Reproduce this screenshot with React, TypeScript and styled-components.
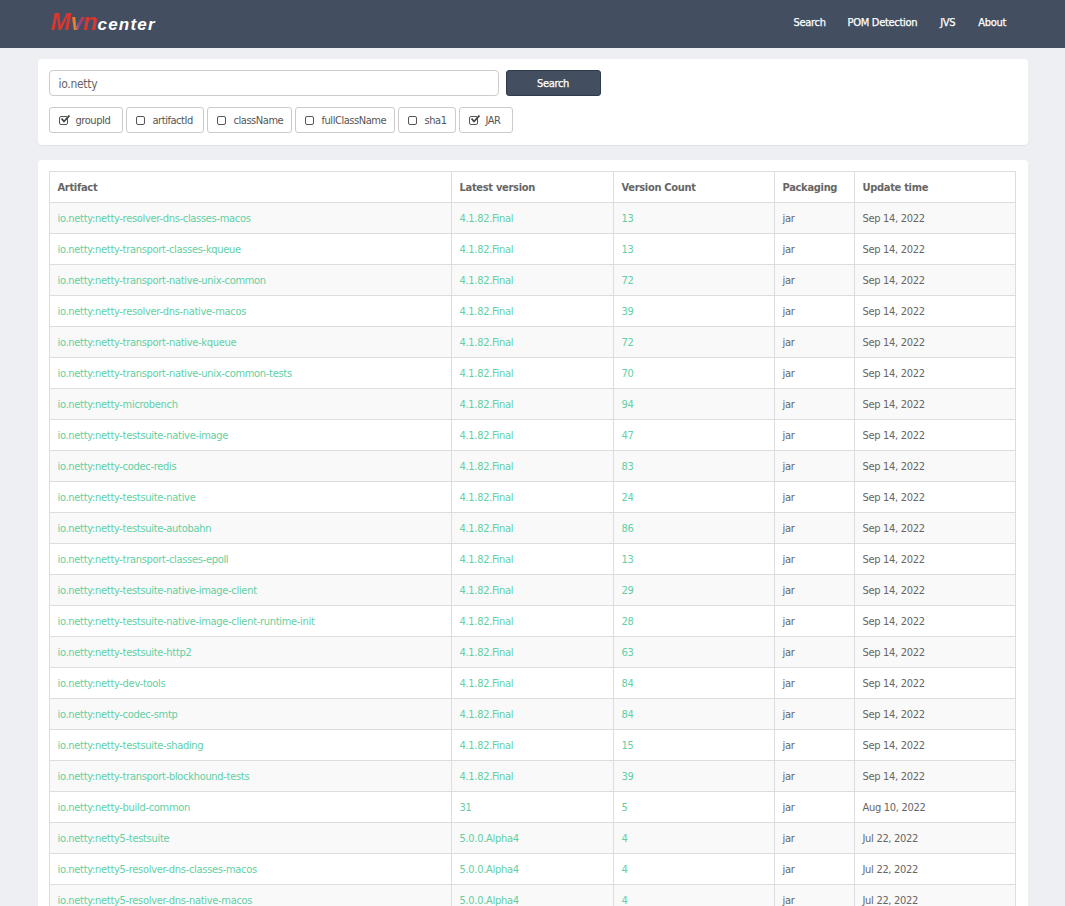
import React from "react";
import styled, { createGlobalStyle } from "styled-components";

const Global = createGlobalStyle`
  html, body {
    margin: 0;
    background: #eeeff3;
    font-family: "DejaVu Sans Condensed", "DejaVu Sans", sans-serif;
    font-size: 11px;
    letter-spacing: -0.3px;
    color: #666;
  }
`;

const Header = styled.header`
  height: 48px;
  background: #434f61;
  display: flex;
  align-items: center;
  justify-content: space-between;
  padding: 0 59px 4px 51px;
  box-sizing: border-box;
`;
const Logo = styled.div`
  display: flex;
  align-items: baseline;
  font-family: "Liberation Sans", sans-serif;
  font-style: italic;
  font-weight: 700;
  letter-spacing: 0;
`;
const LogoMvn = styled.span`
  font-size: 24px;
  letter-spacing: -0.5px;
  background: linear-gradient(90deg, #d9372f 0 42%, #e8892a 50%, #8d3fa0 60%, #d9372f 70%);
  -webkit-background-clip: text;
  background-clip: text;
  color: transparent;
`;
const LogoCenter = styled.span`
  font-size: 17px;
  letter-spacing: 1.2px;
  color: #fff;
`;
const Nav = styled.nav`
  display: flex;
  gap: 22px;
`;
const NavLink = styled.a`
  color: #fff;
  -webkit-text-stroke: 0.25px #fff;
  text-decoration: none;
  text-align: center;
  &:nth-child(3) {
    min-width: 17px;
  }
`;
const Main = styled.main`
  width: 990px;
  margin: 11px auto 0;
  display: flex;
  flex-direction: column;
  gap: 15px;
`;
const Card = styled.section`
  background: #fff;
  border-radius: 4px;
  padding: 11px 13px 12px 11px;
  box-shadow: 0 1px 1px rgba(0, 0, 0, 0.06);
`;
const SearchRow = styled.div`
  display: flex;
  gap: 7px;
  margin-bottom: 11px;
`;
const SearchInput = styled.input`
  box-sizing: border-box;
  width: 450px;
  height: 26px;
  padding: 1px 9px 0;
  border: 1px solid #ccc;
  border-radius: 4px;
  font: inherit;
  font-size: 12px;
  letter-spacing: inherit;
  color: #666;
  outline: none;
`;
const SearchButton = styled.button`
  width: 95px;
  height: 26px;
  padding: 1px 0 0;
  border: 1px solid #2f3a4a;
  border-radius: 3px;
  background: #434f61;
  color: #fff;
  -webkit-text-stroke: 0.25px #fff;
  font: inherit;
  letter-spacing: inherit;
`;
const Filters = styled.div`
  display: flex;
  gap: 3px;
`;
const Filter = styled.label<{ $w: number }>`
  box-sizing: border-box;
  width: ${(p) => p.$w}px;
  height: 26px;
  display: flex;
  align-items: center;
  gap: 8px;
  padding: 1px 0 0 9px;
  border: 1px solid #ccc;
  border-radius: 3px;
  color: #555;
  letter-spacing: -0.45px;
`;
const Box = styled.span`
  width: 7px;
  height: 7px;
  margin-top: -1px;
  border: 1px solid #555;
  border-radius: 2px;
  position: relative;
  flex: none;
`;
const Tick = styled.svg`
  position: absolute;
  left: 0;
  top: -2px;
  width: 10px;
  height: 9px;
`;
const Table = styled.table`
  width: 100%;
  table-layout: fixed;
  border-collapse: collapse;
`;
const Th = styled.th<{ $w: number }>`
  width: ${(p) => p.$w}px;
  height: 31px;
  box-sizing: border-box;
  border: 1px solid #ddd;
  padding: 0 8px;
  text-align: left;
  font-weight: 700;
  color: #666;
`;
const Tr = styled.tr`
  &:nth-child(odd) {
    background: #f9f9f9;
  }
`;
const Td = styled.td<{ $green?: boolean }>`
  height: 31px;
  box-sizing: border-box;
  border: 1px solid #ddd;
  padding: 0 8px;
  color: ${(p) => (p.$green ? "#62cfa4" : "#666")};
`;

const filters: [string, boolean, number][] = [
  ["groupId", true, 74],
  ["artifactId", false, 78],
  ["className", false, 85],
  ["fullClassName", false, 100],
  ["sha1", false, 58],
  ["JAR", true, 54],
];

const F = "4.1.82.Final";
const A = "5.0.0.Alpha4";
const S = "Sep 14, 2022";
const J = "Jul 22, 2022";
const rows: [string, string, number, string][] = [
  ["netty-resolver-dns-classes-macos", F, 13, S],
  ["netty-transport-classes-kqueue", F, 13, S],
  ["netty-transport-native-unix-common", F, 72, S],
  ["netty-resolver-dns-native-macos", F, 39, S],
  ["netty-transport-native-kqueue", F, 72, S],
  ["netty-transport-native-unix-common-tests", F, 70, S],
  ["netty-microbench", F, 94, S],
  ["netty-testsuite-native-image", F, 47, S],
  ["netty-codec-redis", F, 83, S],
  ["netty-testsuite-native", F, 24, S],
  ["netty-testsuite-autobahn", F, 86, S],
  ["netty-transport-classes-epoll", F, 13, S],
  ["netty-testsuite-native-image-client", F, 29, S],
  ["netty-testsuite-native-image-client-runtime-init", F, 28, S],
  ["netty-testsuite-http2", F, 63, S],
  ["netty-dev-tools", F, 84, S],
  ["netty-codec-smtp", F, 84, S],
  ["netty-testsuite-shading", F, 15, S],
  ["netty-transport-blockhound-tests", F, 39, S],
  ["netty-build-common", "31", 5, "Aug 10, 2022"],
  ["netty5-testsuite", A, 4, J],
  ["netty5-resolver-dns-classes-macos", A, 4, J],
  ["netty5-resolver-dns-native-macos", A, 4, J],
];

const App: React.FC = () => {
  return (
    <>
      <Global />
      <Header>
        <Logo>
          <LogoMvn>Mvn</LogoMvn>
          <LogoCenter>center</LogoCenter>
        </Logo>
        <Nav>
          <NavLink>Search</NavLink>
          <NavLink>POM Detection</NavLink>
          <NavLink>JVS</NavLink>
          <NavLink>About</NavLink>
        </Nav>
      </Header>
      <Main>
        <Card>
          <SearchRow>
            <SearchInput defaultValue="io.netty" />
            <SearchButton>Search</SearchButton>
          </SearchRow>
          <Filters>
            {filters.map(([name, on, w]) => (
              <Filter key={name} $w={w}>
                <Box>
                  {on && (
                    <Tick viewBox="0 0 10 9">
                      <path d="M1.5 3.5 L4 6.5 L9.5 0.5" fill="none" stroke="#444" strokeWidth="1.8" />
                    </Tick>
                  )}
                </Box>
                {name}
              </Filter>
            ))}
          </Filters>
        </Card>
        <Card>
          <Table>
            <thead>
              <tr>
                <Th $w={402}>Artifact</Th>
                <Th $w={162}>Latest version</Th>
                <Th $w={161}>Version Count</Th>
                <Th $w={80}>Packaging</Th>
                <Th $w={161}>Update time</Th>
              </tr>
            </thead>
            <tbody>
              {rows.map(([name, version, count, date]) => (
                <Tr key={name}>
                  <Td $green>io.netty:{name}</Td>
                  <Td $green>{version}</Td>
                  <Td $green>{count}</Td>
                  <Td>jar</Td>
                  <Td>{date}</Td>
                </Tr>
              ))}
            </tbody>
          </Table>
        </Card>
      </Main>
    </>
  );
};

export default App;
